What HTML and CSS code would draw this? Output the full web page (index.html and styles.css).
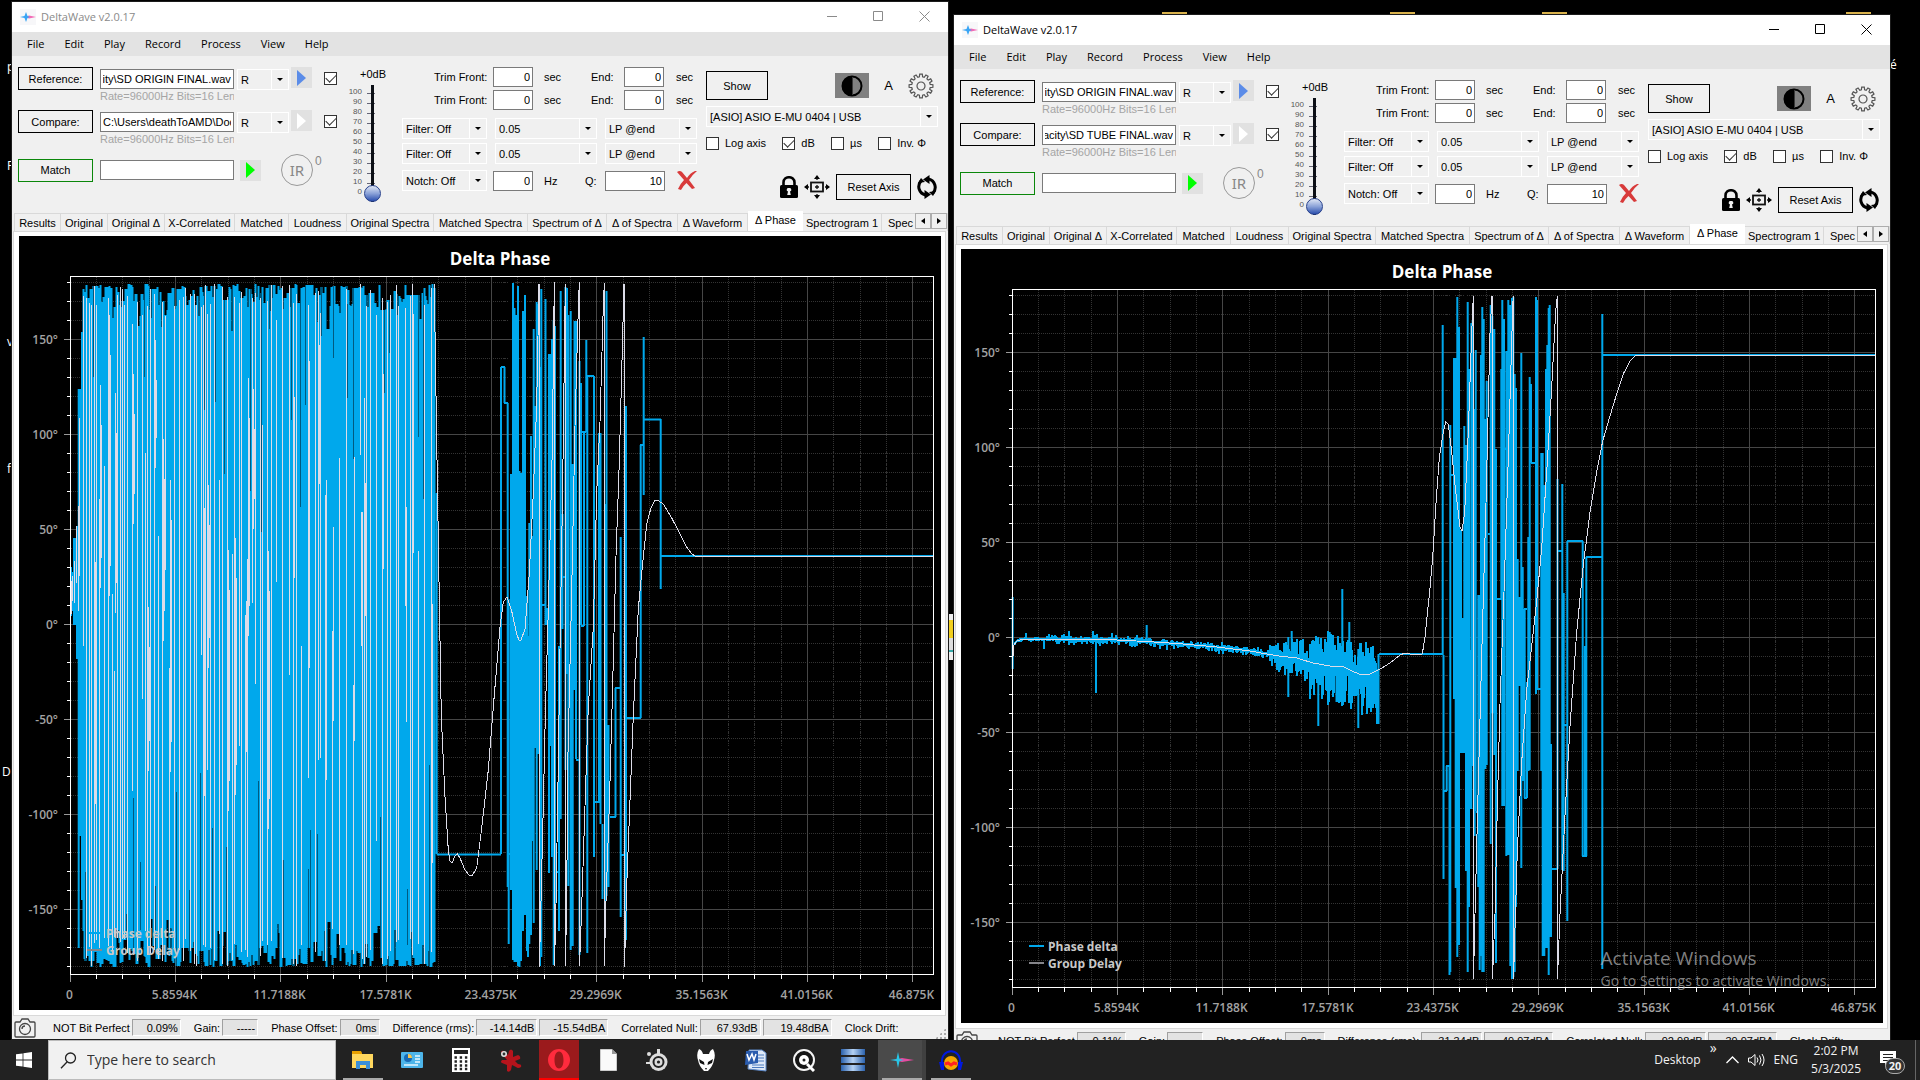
FILE: index.html
```html
<!DOCTYPE html>
<html lang="en">
<head>
    <meta charset="UTF-8">
    <meta name="viewport" content="width=device-width, initial-scale=1.0">
    <title>DeltaWave</title>
    <link rel="stylesheet" href="styles.css">
</head>
<body>
    <main class="desktop" id="desktop">
        <span class="desk-text t1">p</span>
        <span class="desk-text t2">F</span>
        <span class="desk-text t3">v</span>
        <span class="desk-text t4">f</span>
        <span class="desk-text t5">D</span>
        <span class="desk-text t6">é</span>
        <i class="folder f1"></i>
        <i class="folder f2"></i>
        <i class="folder f3"></i>
        <i class="folder f4"></i>
        <i class="desk-icon"></i>
        <div class="watermark">
            <div class="watermark-title">Activate Windows</div>
            <div class="watermark-text">Go to Settings to activate Windows.</div>
        </div>
    </main>

    <footer class="taskbar">
        <button class="start" aria-label="Start">
            <svg width="16" height="16" viewBox="0 0 16 16"><path fill="#fff" d="M0 2.3 6.6 1.4V7.6H0zM7.4 1.3 16 0V7.6H7.4zM0 8.4H6.6V14.6L0 13.7zM7.4 8.4H16V16L7.4 14.7z"/></svg>
        </button>
        <label class="search">
            <svg width="17" height="17" viewBox="0 0 17 17" fill="none" stroke="#222" stroke-width="1.3"><circle cx="10.5" cy="6" r="5"/><path d="M7 10 1 16.3"/></svg>
            <input type="text" placeholder="Type here to search" aria-label="Type here to search">
        </label>
        <div class="apps">
            <button class="app running" aria-label="File Explorer">
                <svg width="22" height="20" viewBox="0 0 22 20"><path fill="#e8a000" d="M0 1H9L10 3V6H0z"/><path fill="#ffd75e" d="M0 4H21V18H0z"/><path fill="#3b8fd8" d="M4 19V11H18V19H14V15H8V19z"/></svg>
            </button>
            <button class="app" aria-label="System">
                <svg width="22" height="16" viewBox="0 0 22 16"><rect width="22" height="16" rx="1" fill="#4db5ea"/><circle cx="7" cy="6" r="4" fill="#1769b5"/><path fill="#f9c74f" d="M7 6V2A4 4 0 0 1 11 6z"/><path stroke="#e8f7ff" stroke-width="1.5" d="M14 4H19M14 7H19M14 10H19M3 13H17"/></svg>
            </button>
            <button class="app" aria-label="Calculator">
                <svg width="18" height="24" viewBox="0 0 18 24"><rect width="18" height="24" fill="#fff"/><rect x="2" y="2" width="14" height="4" fill="#222"/><path stroke="#222" stroke-width="2.4" stroke-dasharray="2.4 2.8" d="M2.5 9.5H16M2.5 13.5H16M2.5 17.5H16M2.5 21H16"/></svg>
            </button>
            <button class="app" aria-label="XnView">
                <svg width="24" height="23" viewBox="0 0 24 23"><path fill="#b5141c" d="M3 4Q3 1 6 2L10 6 11 2Q13-1 15 2L15 8 20 6Q23 7 22 10L17 12 20 15Q24 15 23 18 20 20 18 18L14 16 13 21Q11 24 9 22L9 16 4 14Q2 13 4 11L9 11z"/><circle cx="6" cy="5" r="3" fill="#ddd"/><circle cx="6" cy="5" r="1.4" fill="#333"/></svg>
            </button>
            <button class="app opera" aria-label="Opera">
                <svg width="24" height="24" viewBox="0 0 24 24"><path fill="#ff2b3d" fill-rule="evenodd" d="M12 1A11 11 0 1 0 12 23 11 11 0 1 0 12 1zM12 3.5C15 3.5 16.5 7.5 16.5 12S15 20.5 12 20.5 7.5 16.5 7.5 12 9 3.5 12 3.5z"/></svg>
            </button>
            <button class="app" aria-label="Document">
                <svg width="17" height="22" viewBox="0 0 17 22"><path fill="#fafafa" stroke="#ccc" d="M.5.5H12L16.5 5V21.5H.5z"/><path fill="#999" d="M12 0V5H17z"/></svg>
            </button>
            <button class="app" aria-label="SteelSeries">
                <svg width="22" height="23" viewBox="0 0 22 23"><circle cx="12.5" cy="13" r="9" fill="#ddd"/><circle cx="12.5" cy="13" r="5" fill="none" stroke="#222" stroke-width="2"/><circle cx="12.5" cy="13" r="1.6" fill="#222"/><path fill="#ddd" d="M11 0H14V5H11zM0 13H6V15H0z"/><circle cx="3" cy="5" r="2" fill="#ddd"/></svg>
            </button>
            <button class="app" aria-label="foobar2000">
                <svg width="18" height="22" viewBox="0 0 18 22"><path fill="#fff" d="M2 0Q5 1 6 5H12Q13 1 16 0 19 5 17 11 16 17 11 22H7Q2 17 1 11-1 5 2 0z"/><path fill="#111" d="M2 10 7 13 7.5 16 3 14zM16 10 11 13 10.5 16 15 14zM8 19H10L9 21z"/></svg>
            </button>
            <button class="app" aria-label="Word">
                <svg width="23" height="23" viewBox="0 0 23 23"><path fill="#dfe9f8" stroke="#5b86c4" d="M5 1H18L22 4V22L4 20z"/><path stroke="#4d7cc0" d="M13 6H20M14 9H20M13 12H20M8 16H20M8 18.5H20"/><path fill="#2a5cae" d="M2 2H14V14L1 16z"/><path fill="none" stroke="#fff" stroke-width="1.5" d="M3 5 5 11 8 5 10 11 12 5"/></svg>
            </button>
            <button class="app" aria-label="Record player">
                <svg width="22" height="23" viewBox="0 0 22 23"><circle cx="11" cy="11" r="10" fill="#151515" stroke="#f4f4f4" stroke-width="2"/><circle cx="11" cy="11" r="5" fill="#fff"/><circle cx="11" cy="11" r="1.5" fill="#222"/><path stroke="#fff" stroke-width="3" d="M14 15 21 22"/></svg>
            </button>
            <button class="app" aria-label="Storage">
                <svg width="24" height="22" viewBox="0 0 24 22"><defs><linearGradient id="bars"><stop offset="0" stop-color="#2b62ad"/><stop offset=".5" stop-color="#b5d2f4"/><stop offset="1" stop-color="#2b62ad"/></linearGradient></defs><path fill="url(#bars)" d="M0 0H24V6H0zM0 8H24V14H0zM0 16H24V22H0z"/></svg>
            </button>
            <button class="app active" aria-label="DeltaWave">
                <svg width="24" height="16" viewBox="0 0 24 16"><path fill="#e84aa0" d="M4 8 12 6 24 8 12 10z"/><path fill="#27c7e8" d="M0 8 6.5 7 8 0 9.500 7 14 8 9.500 9 8 16 6.500 9z"/></svg>
            </button>
            <button class="app running" aria-label="Audacity">
                <svg width="24" height="21" viewBox="0 0 24 21"><circle cx="12" cy="13" r="7" fill="#f6a800"/><path fill="none" stroke="#0018e0" stroke-width="2" d="M3 14C1-3 23-3 21 14"/><path fill="#0018e0" d="M0 12H5V20H2zM19 12H24L22 20H19z"/><path stroke="#f22" stroke-width="3" d="M6 14 9 13 12 15 15 13 18 14" fill="none"/></svg>
            </button>
        </div>
        <div class="tray">
            <span>Desktop</span>
            <span class="more">»</span>
            <svg width="13" height="8" viewBox="0 0 13 8" fill="none" stroke="#fff" stroke-width="1.3"><path d="M.5 7 6.5 1 12.5 7"/></svg>
            <svg width="17" height="14" viewBox="0 0 17 14" fill="none" stroke="#fff"><path d="M.5 5H3L7 1.5V12.5L3 9H.5zM9 4.5Q11 7 9 9.5M11.5 2.5Q14.5 7 11.5 11.5M14 1Q18 7 14 13"/></svg>
            <span>ENG</span>
            <div class="clock"><div>2:02 PM</div><div>5/3/2025</div></div>
            <div class="notice">
                <svg width="16" height="15" viewBox="0 0 16 15"><path fill="#fff" d="M0 0H16V12H8L5 15V12H0z"/><path stroke="#222" d="M3 3.5H13M3 6.5H13M3 9.5H9"/></svg>
                <b class="badge">20</b>
            </div>
        </div>
    </footer>

    <template id="window-template">
        <section class="window">
            <header class="titlebar">
                <svg class="logo" width="16" height="16" viewBox="0 0 16 16"><rect width="16" height="16" fill="#f7f7f9"/><path fill="#f26bb5" d="M5 8 9 6.5 16 8 9 9.5z"/><path fill="#38a5f5" d="M0 8 4.5 7 6 3 7.5 7 10 8 7.5 9 6 13 4.5 9z"/></svg>
                <span class="title">DeltaWave v2.0.17</span>
                <button class="caption" aria-label="Minimize"><svg width="11" height="11" stroke="currentColor"><path d="M0 5.5H10"/></svg></button>
                <button class="caption" aria-label="Maximize"><svg width="11" height="11" fill="none" stroke="currentColor"><path d="M.5.5H9.5V9.5H.5z"/></svg></button>
                <button class="caption" aria-label="Close"><svg width="11" height="11" stroke="currentColor"><path d="M.5.5 10.5 10.5M10.5.5.5 10.5"/></svg></button>
            </header>
            <nav class="menu">
                <button>File</button><button>Edit</button><button>Play</button><button>Record</button><button>Process</button><button>View</button><button>Help</button>
            </nav>

            <div class="panel">
                <div class="files">
                    <button class="push">Reference:</button>
                    <div class="file">
                        <input class="field path reference" type="text" aria-label="Reference file">
                        <div class="rate">Rate=96000Hz Bits=16 Leng</div>
                    </div>
                    <span class="combo"><select aria-label="Reference channel"><option>R</option></select></span>
                    <button class="play blue" aria-label="Play reference"></button>
                    <input class="check lower" type="checkbox" checked aria-label="Use reference">

                    <button class="push">Compare:</button>
                    <div class="file">
                        <input class="field path compare" type="text" aria-label="Compare file">
                        <div class="rate">Rate=96000Hz Bits=16 Leng</div>
                    </div>
                    <span class="combo"><select aria-label="Compare channel"><option>R</option></select></span>
                    <button class="play white" aria-label="Play comparison"></button>
                    <input class="check lower" type="checkbox" checked aria-label="Use comparison">

                    <button class="push match">Match</button>
                    <input class="field path match-field" type="text" aria-label="Match">
                    <div class="match-tools">
                        <button class="play green" aria-label="Play match"></button>
                        <button class="ir">IR</button>
                        <span class="ir-count">0</span>
                    </div>
                </div>

                <div class="volume">
                    <div class="volume-value">+0dB</div>
                    <div class="volume-body">
                        <div class="scale">
                            <span>100</span><span>90</span><span>80</span><span>70</span><span>60</span><span>50</span><span>40</span><span>30</span><span>20</span><span>10</span><span>0</span>
                        </div>
                        <input class="slider" type="range" min="0" max="100" value="0" aria-label="Volume">
                    </div>
                </div>

                <div class="edits">
                    <div class="group">
                        <div class="trim">
                            <span>Trim Front:</span><input class="field number" type="text" value="0" aria-label="Trim front, reference"><span>sec</span>
                            <span>End:</span><input class="field number" type="text" value="0" aria-label="Trim end, reference"><span>sec</span>
                        </div>
                        <div class="trim">
                            <span>Trim Front:</span><input class="field number" type="text" value="0" aria-label="Trim front, compare"><span>sec</span>
                            <span>End:</span><input class="field number" type="text" value="0" aria-label="Trim end, compare"><span>sec</span>
                        </div>
                    </div>
                    <div class="group filters">
                        <div class="filter">
                            <span class="combo"><select aria-label="Filter 1"><option>Filter: Off</option></select></span>
                            <span class="combo"><select aria-label="Filter 1 frequency"><option>0.05</option></select></span>
                            <span class="combo"><select aria-label="Filter 1 type"><option>LP @end</option></select></span>
                        </div>
                        <div class="filter">
                            <span class="combo"><select aria-label="Filter 2"><option>Filter: Off</option></select></span>
                            <span class="combo"><select aria-label="Filter 2 frequency"><option>0.05</option></select></span>
                            <span class="combo"><select aria-label="Filter 2 type"><option>LP @end</option></select></span>
                        </div>
                        <div class="notch">
                            <span class="combo"><select aria-label="Notch"><option>Notch: Off</option></select></span>
                            <input class="field number" type="text" value="0" aria-label="Notch frequency"><span>Hz</span>
                            <span>Q:</span><input class="field number" type="text" value="10" aria-label="Notch Q">
                            <button class="icon" aria-label="Clear filters"><svg width="20" height="19" viewBox="0 0 20 19"><path fill="#d83a3a" d="M0 1C2-.5 4 0 5 1L10 7Q13 2 18 0H20Q15 4 12 9L18 17 15 18 9.5 12Q6 15 4 19L1 18Q3 13 7 9z"/></svg></button>
                        </div>
                    </div>
                </div>

                <div class="output">
                    <div class="output-row">
                        <button class="push show">Show</button>
                        <button class="contrast" aria-label="Contrast"><svg width="22" height="22" viewBox="0 0 22 22"><circle cx="11" cy="11" r="9.5" fill="none" stroke="#000" stroke-width="2"/><path d="M11 1A10 10 0 0 0 11 21z"/><path fill="none" stroke="#3a3a3a" d="M11.5 2V20"/></svg></button>
                        <span class="letter">A</span>
                        <button class="icon" aria-label="Settings"><svg width="26" height="26" viewBox="-13 -13 26 26" fill="none" stroke="#555" stroke-width="1.2"><path class="gear"/><circle r="4"/></svg></button>
                    </div>
                    <span class="combo"><select aria-label="Output device"><option>[ASIO] ASIO E-MU 0404 | USB</option></select></span>
                    <div class="options">
                        <label><input class="check" type="checkbox">Log axis</label>
                        <label><input class="check" type="checkbox" checked>dB</label>
                        <label><input class="check" type="checkbox">µs</label>
                        <label><input class="check" type="checkbox">Inv. Φ</label>
                    </div>
                    <div class="axis-row">
                        <button class="icon" aria-label="Lock"><svg width="18" height="22" viewBox="0 0 18 22"><path fill="none" stroke="#000" stroke-width="2.6" d="M3.5 11V6.5C3.5-.5 14.5-.5 14.5 6.5V11"/><rect y="9" width="18" height="13" rx="1.5"/><path fill="#f0f0f0" d="M9 12A1.8 1.8 0 0 1 10 15.5L10.8 19H7.2L8 15.5A1.8 1.8 0 0 1 9 12z"/></svg></button>
                        <button class="icon" aria-label="Fit"><svg width="26" height="24" viewBox="0 0 26 24"><rect x="7" y="7.5" width="12" height="9" fill="none" stroke="#111" stroke-width="1.8"/><path d="M13 0 16 4H10zM13 24 16 20H10zM0 12 4 9V15zM26 12 22 9V15z"/><path stroke="#111" stroke-width="1.3" d="M13 3V5M13 19V21M3 12H5M21 12H23M11 12H15M13 10V14"/></svg></button>
                        <button class="push reset">Reset Axis</button>
                        <button class="icon" aria-label="Refresh"><svg width="20" height="24" viewBox="0 0 20 24"><path fill="none" stroke="#000" stroke-width="3" d="M8.5 20A8.500 8.500 0 0 1 4 6M11.5 4A8.500 8.500 0 0 1 16 18"/><path d="M6 4.5 12.5 0V9zM14 19.5 7.5 15V24z"/><path d="M1 8 4 3 8 7zM19 16 16 21 12 17z"/></svg></button>
                    </div>
                </div>
            </div>

            <div class="tabs">
                <button>Results</button><button>Original</button><button>Original Δ</button><button>X-Correlated</button><button>Matched</button><button>Loudness</button><button>Original Spectra</button><button>Matched Spectra</button><button>Spectrum of Δ</button><button>Δ of Spectra</button><button>Δ Waveform</button><button class="selected">Δ Phase</button><button>Spectrogram 1</button><button>Spec</button>
                <div class="tab-scroll"><button aria-label="Scroll left"><i class="tri left"></i></button><button aria-label="Scroll right"><i class="tri right"></i></button></div>
            </div>
            <div class="page"><svg class="chart" viewBox="0 0 922 774"></svg></div>

            <footer class="status">
                <svg class="camera" width="22" height="20" viewBox="0 0 22 20" fill="none" stroke="#444" stroke-width="1.3"><path d="M1 5Q1 4 2 4H6L8 1H14L16 4H20Q21 4 21 5V18Q21 19 20 19H2Q1 19 1 18z"/><circle cx="11" cy="11" r="5.5"/><path d="M8 11A3 3 0 0 1 11 8"/></svg>
                <span>NOT Bit Perfect</span><output></output>
                <span>Gain:</span><output></output>
                <span>Phase Offset:</span><output></output>
                <span>Difference (rms):</span><output></output><output></output>
                <span>Correlated Null:</span><output></output><output></output>
                <span>Clock Drift:</span>
                <i class="grip"></i>
            </footer>
        </section>
    </template>
    <script src="script.js"></script>
</body>
</html>
```

FILE: styles.css
```css
* {
    box-sizing: border-box;
}
body {
    margin: 0;
    height: 100vh;
    display: flex;
    flex-direction: column;
    background: #000;
    color: #000;
    font: 11px/14px "Liberation Sans", Arial, sans-serif;
    overflow: hidden;
}
button, input, select {
    font: inherit;
    color: inherit;
    margin: 0;
}
button {
    padding: 0;
    border: none;
    background: none;
    white-space: nowrap;
}

/* desktop */
.desktop {
    position: relative;
    flex: 1;
    min-height: 0;
    overflow: hidden;
}
.desk-text {
    position: absolute;
    left: 7px;
    color: #fff;
    font: 12px/14px "Open Sans", sans-serif;
}
.t1 { top: 60px; }
.t2 { top: 159px; }
.t3 { top: 335px; }
.t4 { top: 462px; }
.t5 { top: 765px; left: 2px; }
.t6 { top: 58px; left: 1890px; }
.folder {
    position: absolute;
    top: 12px;
    width: 25px;
    height: 3px;
    background: #d9b24c;
}
.f1 { left: 1162px; }
.f2 { left: 1390px; }
.f3 { left: 1542px; }
.f4 { left: 1846px; }
.desk-icon {
    position: absolute;
    left: 948px;
    top: 614px;
    width: 6px;
    height: 46px;
    background: linear-gradient(#eee 6px, #f2cf1d 6px 24px, #ddd 24px 36px, #3aa 36px 38px, #eee 38px);
}
.watermark {
    position: absolute;
    right: 90px;
    bottom: 49px;
    z-index: 2;
    color: rgba(170, 170, 170, .75);
    font-family: "Open Sans", sans-serif;
}
.watermark-title {
    font-size: 19px;
    line-height: 25px;
}
.watermark-text {
    font-size: 14px;
    line-height: 20px;
}

/* window frame */
.window {
    position: absolute;
    width: 48.75%;
    display: flex;
    flex-direction: column;
    background: #f0f0f0;
    outline: 1px solid #1c1c1c;
}
.window.first {
    left: 12px;
    top: 2px;
    bottom: 1px;
}
.window.second {
    right: 30px;
    top: 15px;
    bottom: -12px;
}
.titlebar {
    flex: none;
    height: 30px;
    display: flex;
    align-items: center;
    gap: 5px;
    padding: 0 3px 1px 8px;
    background: #fff;
    font: 11px/14px "Open Sans", sans-serif;
}
.first .titlebar {
    color: #8a8a8a;
}
.title {
    flex: 1;
}
.caption {
    width: 41px;
    height: 29px;
    display: grid;
    place-items: center;
}
.menu {
    flex: none;
    height: 24px;
    display: flex;
    align-items: center;
    gap: 20px;
    padding-left: 15px;
    background: #e3e3e3;
    font: 11px/14px "Open Sans", sans-serif;
}

/* control panel */
.panel {
    flex: none;
    height: 157px;
    display: flex;
    padding: 11px 10px 12px 6px;
}
.push {
    width: 75px;
    height: 23px;
    border: 1px solid #000;
    background: #f0f0f0;
}
.push.match {
    border-color: #0a870a;
}
.field {
    height: 20px;
    padding: 0 2px;
    border: 1px solid #7a7a7a;
    border-radius: 0;
    background: #fff;
}
.path {
    display: block;
    width: 134px;
}
.number {
    width: 40px;
    text-align: right;
}
.combo {
    position: relative;
    display: block;
    height: 21px;
    border: 1px solid #fff;
}
.combo select {
    appearance: none;
    display: block;
    width: 100%;
    height: 19px;
    padding: 0 18px 0 3px;
    border: none;
    border-radius: 0;
    background: #f0f0f0;
}
.combo::before {
    content: "";
    position: absolute;
    right: 16px;
    top: 0;
    bottom: 0;
    border-left: 1px solid #fff;
    pointer-events: none;
}
.combo::after {
    content: "";
    position: absolute;
    right: 5px;
    top: 8px;
    border: 3px solid transparent;
    border-top-color: #000;
    border-bottom: none;
    pointer-events: none;
}
.check {
    appearance: none;
    flex: none;
    width: 13px;
    height: 13px;
    display: grid;
    place-items: center;
    border: 1px solid #333;
    background: #fff;
}
.check:checked::before {
    content: "";
    width: 9px;
    height: 5px;
    margin-top: -3px;
    border: solid #333;
    border-width: 0 0 1px 1px;
    transform: rotate(-45deg);
}
.icon {
    display: grid;
    place-items: center;
}
.files {
    display: grid;
    grid-template-columns: 82px 137px 54px 33px 13px;
    grid-template-rows: 43px 44px 32px;
    align-items: start;
}
.files .combo {
    width: 52px;
    margin-top: 2px;
}
.file {
    width: 134px;
    padding-top: 2px;
}
.rate {
    overflow: hidden;
    white-space: nowrap;
    color: #a5a5a5;
}
.lower {
    margin-top: 5px;
}
.play {
    width: 21px;
    height: 21px;
    background: #e1e1e1;
    display: grid;
    place-items: center;
}
.play::before {
    content: "";
    border: 8px solid transparent;
    border-left: 9px solid;
    border-right: none;
}
.play.blue { color: #5b8ce8; }
.play.white { color: #fff; }
.play.green { color: #0f0; }
.match, .match-field {
    align-self: center;
}
.match-tools {
    grid-column: 3 / 6;
    align-self: center;
    display: flex;
    align-items: center;
    padding-left: 3px;
}
.ir {
    width: 32px;
    height: 32px;
    margin-left: 20px;
    border: 1px solid #999;
    border-radius: 50%;
    color: #888;
    font: 15px/20px "Noto Sans", sans-serif;
}
.ir-count {
    align-self: flex-start;
    padding-left: 2px;
    color: #888;
    font-size: 12px;
}
.volume {
    width: 53px;
    margin-left: 9px;
}
.volume-value {
    padding: 0 0 4px 14px;
}
.volume-body {
    display: flex;
    gap: 2px;
}
.scale {
    width: 16px;
    padding-top: 2px;
    color: #555;
    font-size: 8px;
    line-height: 10px;
    text-align: right;
}
.scale span {
    display: block;
}
.slider {
    appearance: none;
    writing-mode: vertical-lr;
    direction: rtl;
    width: 17px;
    height: 117px;
    background: repeating-linear-gradient(#667 0 1px, transparent 1px 10px) 3px 8px / 8px 101px no-repeat;
}
.slider::-webkit-slider-runnable-track {
    width: 3px;
    background: #0c0f16;
}
.slider::-webkit-slider-thumb {
    appearance: none;
    width: 17px;
    height: 17px;
    margin-left: -7px;
    border: 1px solid #27418c;
    border-radius: 50%;
    background: linear-gradient(#dfe6f5, #8ba2d8 50%, #2b4fae);
}
.edits {
    width: 295px;
    margin-left: 3px;
    display: flex;
    flex-direction: column;
    gap: 8px;
}
.group {
    display: grid;
    gap: 3px;
}
.filters {
    gap: 4px;
}
.trim, .filter, .notch {
    display: grid;
    align-items: center;
}
.trim {
    grid-template-columns: 59px 51px 47px 33px 52px auto;
    padding-left: 32px;
}
.filter {
    grid-template-columns: 85px 102px 92px;
    column-gap: 6px;
    justify-content: space-between;
}
.notch {
    grid-template-columns: 91px 51px 41px 20px 72px 20px;
    padding-top: 2px;
}
.notch .combo {
    width: 85px;
}
.notch .number:nth-last-child(2) {
    width: 60px;
}
.output {
    flex: 1;
    margin-left: 9px;
    padding-top: 4px;
    display: flex;
    flex-direction: column;
}
.output-row, .options, .axis-row {
    display: flex;
    align-items: center;
}
.output-row {
    justify-content: flex-end;
    gap: 15px;
    padding: 0 4px 6px 0;
}
.show {
    width: 62px;
    height: 29px;
    margin-right: auto;
}
.contrast {
    width: 34px;
    height: 25px;
    display: grid;
    place-items: center;
    background: #808080;
}
.letter {
    font-size: 13px;
}
.options {
    justify-content: space-between;
    padding: 9px 12px 0 0;
}
.options label {
    display: flex;
    align-items: center;
    gap: 6px;
}
.axis-row {
    margin-top: auto;
    padding: 0 1px 1px 0;
    justify-content: flex-end;
    gap: 6px;
}
.reset {
    height: 26px;
}

/* tabs */
.tabs {
    flex: none;
    position: relative;
    height: 18px;
    margin-left: 2px;
    display: grid;
    grid-template-columns: 47px 47px 57px 70px 54px 58px 87px 94px 79px 71px 70px 55px 79px 1fr;
}
.tabs > button {
    border: 1px solid #d9d9d9;
    border-width: 1px 1px 0 0;
    overflow: hidden;
}
.tabs > button:first-child {
    border-left-width: 1px;
}
.tabs > button.selected {
    margin-top: -2px;
    padding-bottom: 3px;
    border: none;
    background: #fff;
}
.tabs > button:nth-last-child(2) {
    padding-left: 6px;
    text-align: left;
}
.tab-scroll {
    position: absolute;
    right: 1px;
    top: 0;
    display: flex;
}
.tab-scroll button {
    width: 16px;
    height: 16px;
    display: grid;
    place-items: center;
    border: 1px solid #adadad;
    background: #f0f0f0;
}
.tri {
    border: 3px solid transparent;
}
.tri.left {
    border-right: 4px solid #000;
    border-left: none;
}
.tri.right {
    border-left: 4px solid #000;
    border-right: none;
}
.page {
    flex: 1;
    min-height: 0;
    margin: 0 2px 0 1px;
    padding: 4px 4px 5px 5px;
    border: 1px solid #d9d9d9;
    background: #fff;
}

/* chart */
.chart {
    display: block;
    width: 100%;
    height: 100%;
    background: #000;
    font-family: "Open Sans", "Noto Sans", sans-serif;
    font-weight: 600;
    font-size: 12px;
}
.chart text { fill: #a3a3a3; }
.chart .chart-title {
    fill: #fff;
    font-size: 17px;
    font-weight: 700;
}
.chart .legend text {
    fill: #c8c8c8;
    font-weight: 700;
}
.chart path { fill: none; }
.major, .minor, .tick, .frame, .delay, .shade { shape-rendering: crispEdges; }
.major { stroke: #464646; }
.minor {
    stroke: #333;
    stroke-dasharray: 1 1;
}
.tick { stroke: #fff; }
.tick-major { stroke: #999; }
.frame { stroke: #fff; }
.phase {
    stroke: #00a8ec;
    stroke-width: 2;
}
.shade {
    stroke: #005a80;
    stroke-width: 1;
}
.delay {
    stroke: #dcdce8;
    stroke-width: 1;
}
.key-phase {
    stroke: #00a8ec;
    stroke-width: 2;
}
.key-delay {
    stroke: #85858a;
    stroke-width: 2;
}

/* status bar */
.status {
    flex: none;
    height: 23px;
    display: flex;
    align-items: center;
    padding: 0 2px;
    white-space: nowrap;
}
.status span {
    padding: 0 2px 0 11px;
}
.status .camera + span {
    padding-left: 17px;
}
.second .status .camera + span {
    padding-left: 20px;
}
.status output {
    width: 61px;
    height: 17px;
    margin-right: 2px;
    padding-right: 2px;
    border: 1px solid #a0a0a0;
    border-right-color: #fff;
    border-bottom-color: #fff;
    background: #e3e3e3;
    text-align: right;
    line-height: 16px;
}
.status output.w50 { width: 49px; }
.status output.w36 { width: 36px; }
.status output.w40 { width: 40px; }
.status output.w70 { width: 69px; }
.grip {
    width: 11px;
    height: 11px;
    margin-left: auto;
    align-self: flex-end;
    background: radial-gradient(#aaa 1px, transparent 1px) 0 0 / 4px 4px;
    clip-path: polygon(100% 0, 100% 100%, 0 100%);
}

/* taskbar */
.taskbar {
    flex: none;
    height: 40px;
    display: flex;
    background: #222;
    color: #f2f2f2;
    font: 12px/16px "Open Sans", sans-serif;
}
.start {
    width: 48px;
    display: grid;
    place-items: center;
}
.search {
    width: 288px;
    display: flex;
    align-items: center;
    gap: 8px;
    padding-left: 11px;
    border: 1px solid #bbb;
    background: #f1f1f1;
    color: #222;
}
.search input {
    flex: 1;
    min-width: 0;
    border: none;
    background: none;
    font-size: 14px;
}
.search input::placeholder {
    color: #333;
}
.apps {
    display: flex;
    gap: 9px;
    padding-left: 7px;
}
.app {
    width: 40px;
    display: grid;
    place-items: center;
}
.running {
    box-shadow: inset 0 -2px #aaa;
}
.active {
    background: #4a4a4a;
    box-shadow: -4px 0 #4a4a4a, 4px 0 #404040, inset 0 -2px #aaa;
}
.opera {
    background: #9b1a1c;
    box-shadow: inset 0 -2px #f00;
}
.tray {
    margin-left: auto;
    display: flex;
    align-items: center;
    gap: 9px;
    margin-right: 4px;
    padding-right: 9px;
    border-right: 1px solid #666;
}
.more {
    align-self: flex-start;
    font-size: 14px;
}
.clock {
    margin-left: 4px;
    text-align: center;
    line-height: 18px;
}
.notice {
    position: relative;
    width: 26px;
    height: 18px;
    margin-left: 10px;
}
.badge {
    position: absolute;
    left: 5px;
    top: 7px;
    width: 20px;
    height: 16px;
    border: 1px solid #aaa;
    border-radius: 8px;
    background: #333;
    font-size: 11px;
    line-height: 14px;
    text-align: center;
}
```

FILE: script.js
```js
const plot = { left: 51.5, right: 914.5, top: 40.5, bottom: 738.5, zero: 389, perDegree: 1.9023, perTick: 26.34 };

// Repeatable random numbers, so the noise is the same on every load
function makeRandom(seed) {
    return () => {
        seed = (seed * 1664525 + 1013904223) % 4294967296;
        return seed / 4294967296;
    };
}

// Vertical bars are [x, top, bottom], flat runs are [x1, x2, y]
function barPath(bars) {
    return bars.map(([x, a, b]) => `M${x} ${a}V${b}`).join('');
}
function flatPath(flats) {
    return flats.map(([a, b, y]) => `M${a} ${y}H${b}`).join('');
}
function linePath(points) {
    return 'M' + points.map(p => p.join(' ')).join('L');
}

const leftBars = [
    [417.7, 257, 618], [482, 131, 618], [485.5, 131, 167], [488.7, 167, 651], [489.7, 363, 708],
    [492, 238, 654], [494, 47, 724], [495.5, 72, 726], [497, 79, 726], [499, 50, 730], [500.5, 235, 731],
    [502, 237, 725], [504, 75, 695], [506, 59, 679], [508, 360, 715], [509, 400, 721], [510.3, 287, 708],
    [512, 200, 699], [513.3, 300, 605], [514.7, 93, 687], [516, 170, 512], [517.7, 66, 634], [519.3, 68, 518],
    [521, 131, 730], [522.3, 53, 721], [526.5, 63, 389], [528, 372, 389], [530, 118, 637], [531.5, 118, 510],
    [533, 103, 621], [534.7, 84, 729], [536, 90, 706], [540, 410, 695], [541.7, 55, 583], [543.5, 278, 393],
    [546.5, 51, 534], [548, 52, 438], [549.3, 79, 650], [551.7, 75, 714], [553.7, 228, 710], [555.5, 85, 454],
    [557, 85, 523], [560.5, 125, 719], [562, 147, 389], [565, 196, 390], [567.3, 104, 196], [568.3, 140, 717],
    [575, 140, 621], [580, 197, 566], [581.5, 197, 588], [583.5, 588, 663], [586, 268, 670], [587.5, 55, 660],
    [589.5, 489, 651], [596.5, 452, 581], [601.7, 301, 681], [607, 170, 704], [621.7, 209, 482],
    [624.7, 101, 259], [641.7, 183, 353]
];
const leftFlats = [
    [417.7, 482, 618.4], [482, 486, 131], [485, 489, 167], [489, 493, 618], [523, 527, 369], [537, 540, 636],
    [543, 546, 341], [557, 560, 524], [562, 565, 390], [563, 567, 196], [568, 575, 140], [576, 581, 566],
    [591, 597, 581], [596, 602, 452], [602, 606, 619], [607, 622, 482], [621, 625, 209], [625, 642, 183.5],
    [641.7, 914, 320]
];
const leftDelay = [
    [415.7, 48], [416, 96], [417.7, 204], [420.3, 364], [422.3, 480], [426, 561], [429.3, 614], [431, 625],
    [433, 627], [436, 620], [438.3, 618], [441, 622], [446, 634], [450, 639], [453, 640], [457.7, 632],
    [462.7, 592], [469.3, 534], [474.3, 471], [481, 391], [484.3, 366], [488, 361], [492.7, 375], [497.7, 398],
    [500, 404], [502, 404], [506, 393], [510.3, 337], [514.3, 257], [517.7, 168], [520, 48], [520.4, 731],
    [524.3, 570], [526.3, 480], [529.3, 373], [533.3, 212], [535.3, 46], [535.5, 730], [537, 668], [539, 547],
    [541, 413], [543.7, 248], [546.3, 48], [546.5, 730], [547.7, 659], [549, 516], [552.7, 355], [556, 190],
    [558.7, 92], [560.3, 46], [560.5, 730], [562.3, 683], [566, 570], [569.3, 471], [574.3, 391], [577.7, 257],
    [581, 186], [584.3, 70], [585.3, 47], [585.5, 730], [586.3, 686], [590.3, 570], [593.3, 462], [597, 320],
    [600.3, 226], [603.7, 98], [605, 48], [605.5, 731], [607.7, 650], [611.7, 547], [614.3, 480], [619.3, 373],
    [622.7, 337], [627.7, 288], [631.7, 273], [635.3, 265], [638.3, 264], [644.3, 268], [652.7, 282], [661, 298],
    [667.7, 311], [672.7, 318], [676.3, 320], [914, 320]
];

const rightBars = [
    [51.7, 348, 420], [135, 389, 444], [65, 384, 391], [83, 389, 400], [108, 382, 392], [132, 382, 392],
    [151, 384, 395], [185.7, 376, 395], [327.3, 388, 448], [330.7, 382, 422], [357.3, 388, 477], [349, 402, 450],
    [367, 382, 420], [368.7, 383, 418], [375.5, 410, 453], [377, 405, 453], [384, 410, 453], [381.3, 340, 430],
    [388.3, 373, 425], [397.3, 400, 479], [416, 420, 475], [417.5, 405, 475],
    [481.7, 76, 406], [482.5, 406, 630], [485.7, 517, 542], [488.5, 517, 726], [489.3, 176, 723],
    [493, 109, 450], [494.7, 109, 639], [496.3, 48, 708], [498, 78, 696], [500, 281, 504], [501.7, 369, 504],
    [503.3, 177, 504], [505, 196, 622], [506.7, 53, 723], [508, 120, 658], [509, 401, 560], [510.3, 74, 560],
    [511.7, 71, 517], [513.7, 160, 587], [514.7, 101, 562], [517.3, 346, 638], [518.7, 346, 721], [520, 106, 707],
    [521.3, 58, 723], [522.7, 70, 723], [524.3, 170, 520], [525.7, 132, 516], [529.7, 56, 595], [531.3, 67, 464],
    [533.3, 80, 506], [535, 200, 714], [540.3, 120, 350], [541.3, 51, 557], [543, 70, 557], [545.3, 102, 607],
    [547.3, 51, 606], [549.3, 56, 717], [551, 49, 730], [552.3, 48, 728], [553.7, 125, 723], [555, 139, 658],
    [556.7, 310, 522], [558.3, 348, 437], [560.3, 104, 619], [561.7, 318, 532], [563.7, 360, 549], [566, 433, 549],
    [567.3, 288, 522], [568.7, 128, 521], [570, 135, 214], [575, 48, 445], [576, 51, 440], [580.3, 204, 522],
    [581.7, 204, 707], [583.3, 236, 707], [585, 120, 699], [586.3, 96, 699], [587.7, 59, 726], [588.7, 56, 688],
    [590, 495, 688], [596.5, 230, 620], [601.3, 235, 621], [602.7, 344, 622], [606.3, 292, 672],
    [621.7, 292, 607], [624, 397, 607], [625.3, 308, 607], [641.3, 65, 720]
];
const rightFlats = [
    [418, 482, 405], [483, 486, 542], [485, 489, 517], [489, 493, 226], [515, 518, 563], [527, 530, 285],
    [536, 541, 350], [543, 546, 200], [563, 566, 549], [563, 566, 360], [570, 575, 214], [576, 580, 440],
    [590, 596, 620], [596, 601, 302], [602, 606, 476], [606, 622, 292], [621, 626, 607], [625, 641, 308],
    [641, 914.5, 106]
];
const rightDelay = [
    [51.7, 411], [53, 396], [55.7, 392], [62, 390], [89, 390], [122, 390.7], [155.7, 391], [189, 392.7],
    [222, 395], [255.7, 398], [289, 402], [315.7, 406.7], [335.7, 409], [352, 414], [369, 417], [382, 417.7],
    [392.3, 422.7], [400.7, 426], [409, 425], [418, 420.7], [429, 414], [439, 406], [444, 404], [454, 406],
    [461.3, 405], [464, 388], [469, 339], [471.7, 308], [475, 254], [478.3, 209], [482.3, 183], [484.7, 173],
    [487.3, 175], [490.7, 203], [494, 236], [499, 278], [501, 282], [503.7, 263], [507.3, 183], [510.7, 84],
    [512.3, 47], [512.5, 730], [514, 665], [516.7, 558], [520.7, 406], [525, 254], [529, 84], [531, 47],
    [531.5, 730], [534, 665], [536.3, 558], [539, 455], [543, 343], [547.3, 209], [551.7, 58], [552.3, 47],
    [552.5, 730], [556.3, 602], [560.7, 513], [565.7, 441], [570.7, 397], [575.7, 352], [580.7, 299],
    [585.7, 223], [590.7, 138], [594.7, 62], [596.3, 47], [596.5, 730], [599, 665], [604, 566], [609, 477],
    [615.7, 383], [622.3, 316], [629, 263], [635.7, 223], [641.7, 192], [649, 167], [655.7, 145], [662.3, 125],
    [669, 112], [674, 107], [677.3, 106], [914.5, 106]
];

// Wrapped phase noise that fills the left part of the first chart
function wrappedNoise() {
    const rnd = makeRandom(11);
    const bars = [[52, 331, 380], [53.5, 336, 375], [55, 302, 389], [56.5, 302, 389], [58, 290, 423], [59.7, 153, 712], [61.5, 153, 600], [63, 96, 664]];
    const shade = [];
    const delay = [[52.5, 345, 378], [53.5, 340, 365], [55.5, 325, 367], [57.5, 290, 347], [59.5, 270, 375], [60.5, 182, 340]];
    let top = 55;
    let bottom = 720;
    for (let x = 64.5; x < 416; x += 1) {
        // neighbouring columns often share their ends
        if (rnd() < 0.6) {
            top = Math.round(48 + rnd() * rnd() * 50);
        }
        if (rnd() < 0.6) {
            bottom = Math.round(731 - rnd() * rnd() * 60);
        }
        bars.push([x, top, bottom]);
        if (rnd() < 0.05) {
            shade.push([x, top, Math.round(top + 40 + rnd() * 200)]);
        }
        if (rnd() < 0.05) {
            shade.push([x, Math.round(bottom - 40 - rnd() * 160), bottom]);
        }
    }
    for (let x = 64.5; x < 415; x += 2 + Math.floor(rnd() * (x < 250 ? 4 : 6))) {
        const kind = rnd();
        if (kind < 0.65) {
            delay.push([x, 48 + rnd() * 22, 731 - rnd() * 30]);
        } else if (kind < 0.82) {
            delay.push([x, 48 + rnd() * 40, 200 + rnd() * 420]);
        } else {
            delay.push([x, 150 + rnd() * 300, 731 - rnd() * 40]);
        }
        // a slow turn of the curve shows as a wider white patch
        if (rnd() < 0.3) {
            const start = 60 + rnd() * 350;
            const size = 120 + rnd() * 200;
            delay.push([x + 1, start, start + size]);
            if (x < 250) {
                delay.push([x + 2, start + 40, start + size - 30]);
            }
        }
    }
    return { bars, shade, delay: delay.map(([x, a, b]) => [x, a.toFixed(0), b.toFixed(0)]) };
}

// Low noise that grows around the delay curve of the second chart
function smallNoise() {
    const rnd = makeRandom(5);
    const bars = [];
    for (let x = 54; x < 416; x += 1) {
        const i = rightDelay.findIndex(p => p[0] > x);
        const [x0, y0] = rightDelay[i - 1];
        const [x1, y1] = rightDelay[i];
        const y = y0 + (y1 - y0) * (x - x0) / (x1 - x0);
        const wide = x > 308;
        const amp = x < 85 ? 2 : wide ? 10 + Math.min(x - 308, 60) * 0.5 : 6;
        const up = 1 + rnd() * (wide ? 1 : rnd()) * amp * 0.8;
        const down = 1 + rnd() * (wide ? 1 : rnd()) * amp;
        bars.push([x, Math.round(y - up), Math.round(y + down)]);
    }
    return bars;
}

function drawChart(svg, series) {
    const xTicks = [];
    for (let i = 0; plot.left + i * plot.perTick < plot.right; i++) {
        xTicks.push([i, Math.round(plot.left + i * plot.perTick) - 0.5]);
    }
    const yTicks = [];
    for (let d = -180; d <= 180; d += 10) {
        yTicks.push([d, Math.round(plot.zero - d * plot.perDegree) - 0.5]);
    }
    let major = '', minor = '', tick = '', tickMajor = '', labels = '';
    const names = ['0', '5.8594K', '11.7188K', '17.5781K', '23.4375K', '29.2969K', '35.1563K', '41.0156K', '46.875K'];
    xTicks.forEach(([i, x]) => {
        const line = `M${x} ${plot.top}V${plot.bottom}`;
        if (i % 4 === 0) {
            major += line;
            tickMajor += `M${x} ${plot.bottom}v7`;
            labels += `<text x="${x - 1}" y="763" text-anchor="middle">${names[i / 4]}</text>`;
        } else {
            minor += line;
            tick += `M${x} ${plot.bottom}v4`;
        }
    });
    yTicks.forEach(([d, y]) => {
        const line = `M${plot.left} ${y}H${plot.right}`;
        if (d % 50 === 0) {
            major += line;
            tickMajor += `M${plot.left} ${y}h-7`;
            labels += `<text x="39" y="${y + 4.5}" text-anchor="end">${d}°</text>`;
        } else {
            minor += line;
            tick += `M${plot.left} ${y}h-4`;
        }
    });
    svg.innerHTML = `
        <path class="minor" d="${minor}"/>
        <path class="major" d="${major}"/>
        <path class="phase" d="${barPath(series.bars)}${flatPath(series.flats)}"/>
        <path class="shade" d="${barPath(series.shade)}"/>
        <path class="delay" d="${barPath(series.delayBars)}${linePath(series.delay)}"/>
        <g class="legend">
            <path class="key-phase" d="M68 697H83"/><text x="87" y="702">Phase delta</text>
            <path class="key-delay" d="M68 714H83"/><text x="87" y="719">Group Delay</text>
        </g>
        <path class="tick" d="${tick}"/>
        <path class="tick tick-major" d="${tickMajor}"/>
        <path class="frame" d="M${plot.left} ${plot.top}H${plot.right}V${plot.bottom}H${plot.left}z"/>
        ${labels}
        <text class="chart-title" x="481" y="29" text-anchor="middle">Delta Phase</text>`;
}

function gearPath() {
    const teeth = 12;
    const points = [];
    for (let i = 0; i < teeth; i++) {
        [[-0.32, 9.3], [-0.2, 12], [0.2, 12], [0.32, 9.3]].forEach(([offset, r]) => {
            const a = (i + offset) * 2 * Math.PI / teeth;
            points.push([(Math.sin(a) * r).toFixed(1), (-Math.cos(a) * r).toFixed(1)]);
        });
    }
    return linePath(points) + 'z';
}

function openWindow(name, data) {
    const node = document.getElementById('window-template').content.cloneNode(true);
    const win = node.querySelector('.window');
    win.classList.add(name);
    win.querySelector('.gear').setAttribute('d', gearPath());
    win.querySelector('.reference').value = data.reference;
    win.querySelector('.compare').value = data.compare;
    const widths = ['w50', 'w36', 'w40', 'w62', 'w70', 'w62', 'w70'];
    win.querySelectorAll('output').forEach((box, i) => {
        box.textContent = data.status[i];
        box.classList.add(widths[i]);
    });
    drawChart(win.querySelector('.chart'), data.series);
    document.getElementById('desktop').appendChild(node);
    // Long paths show their file name
    win.querySelectorAll('.path').forEach(field => {
        if (field.value.endsWith('.wav')) {
            field.scrollLeft = field.scrollWidth;
        }
    });
}

const noise = wrappedNoise();
openWindow('first', {
    reference: 'city\\SD ORIGIN FINAL.wav',
    compare: 'C:\\Users\\deathToAMD\\Doc',
    status: ['0.09%', '-----', '0ms', '-14.14dB', '-15.54dBA', '67.93dB', '19.48dBA'],
    series: { bars: noise.bars.concat(leftBars), flats: leftFlats, shade: noise.shade, delayBars: noise.delay, delay: leftDelay }
});
openWindow('second', {
    reference: 'city\\SD ORIGIN FINAL.wav',
    compare: 'acity\\SD TUBE FINAL.wav',
    status: ['0.11%', '-----', '0ms', '-31.34dB', '-49.97dBA', '92.98dB', '39.97dBA'],
    series: { bars: smallNoise().concat(rightBars), flats: rightFlats, shade: [], delayBars: [], delay: rightDelay }
});
```
